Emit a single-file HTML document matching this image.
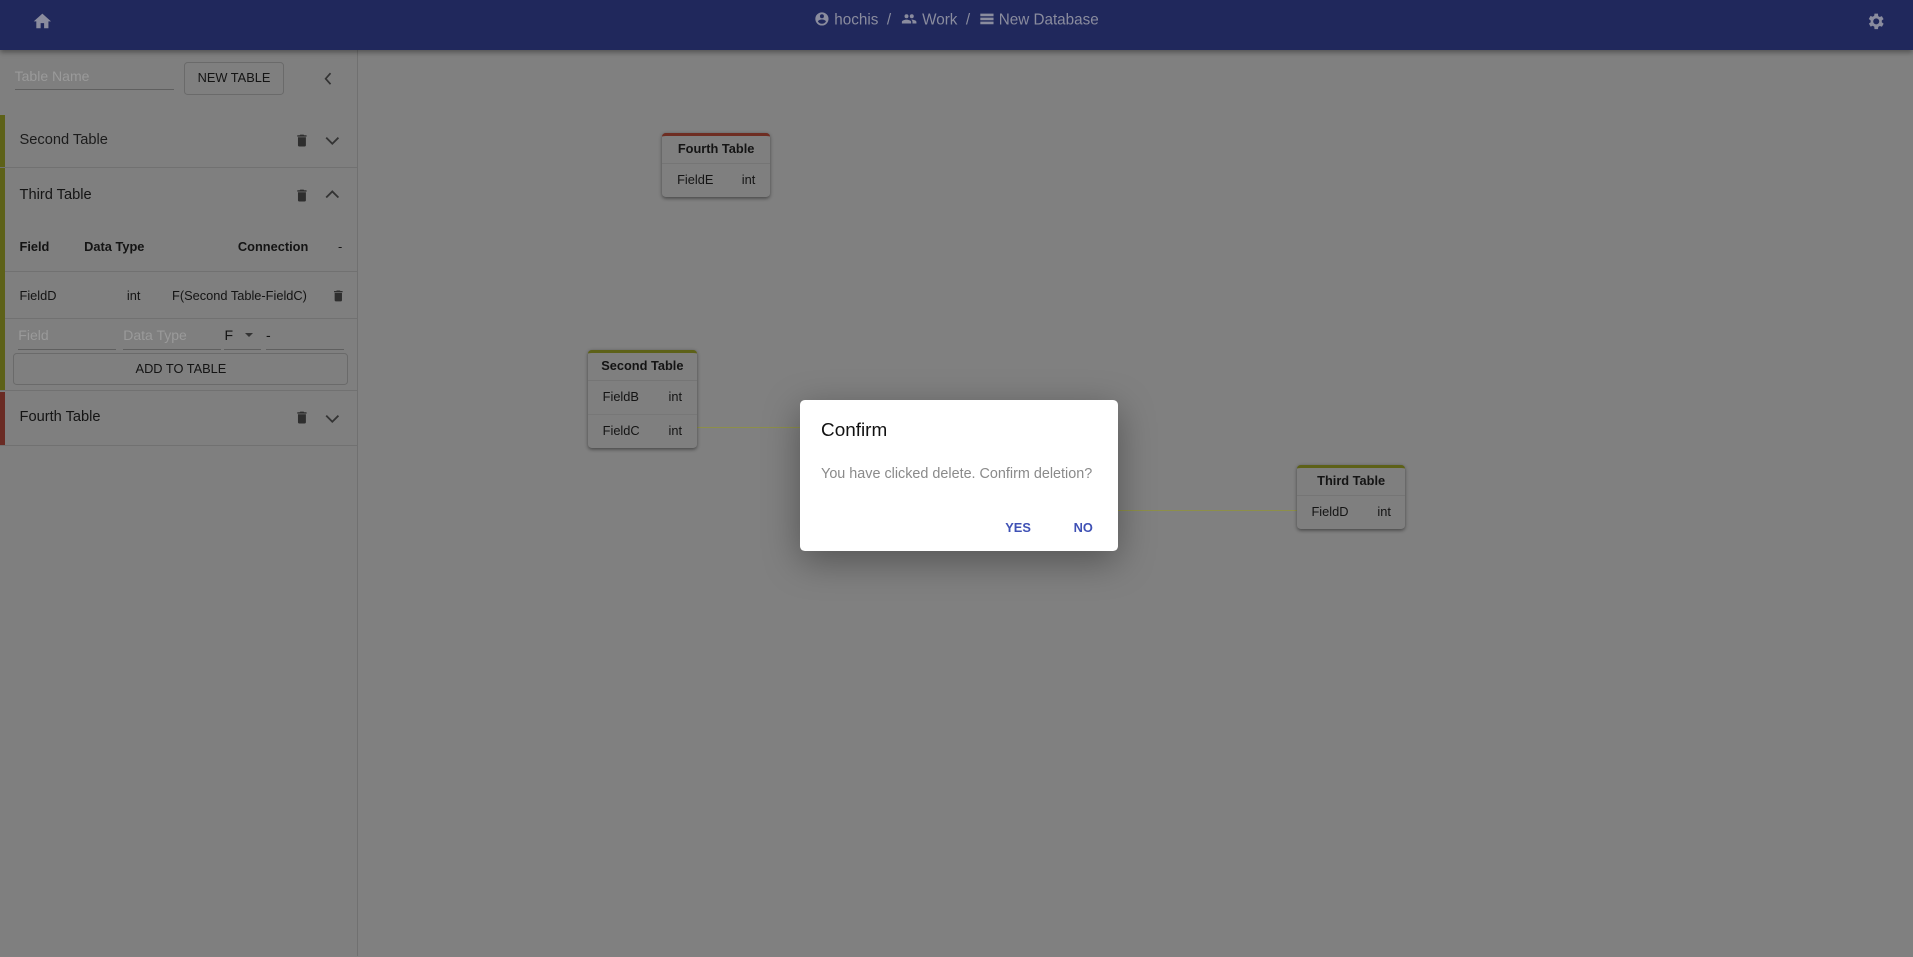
<!DOCTYPE html>
<html><head><meta charset="utf-8"><style>
html,body{margin:0;padding:0;width:1913px;height:957px;overflow:hidden;background:#808080}
#r{zoom:1.22;position:relative;width:1568px;height:784px;font-family:"Liberation Sans",sans-serif;color:#141414}
.a{position:absolute}
.hdr{left:0;top:0;width:1568px;height:41px;background:#20285c;box-shadow:0 2px 4px rgba(0,0,0,.35);z-index:2}
.bc{left:0;right:0;top:9px;text-align:center;color:#8a8c9e;font-size:12.5px}
.side{left:0;top:41px;width:293px;height:743px;border-right:1px solid #707070;background:#7f7f7f}
.row{position:absolute;left:0;width:293px;border-bottom:1px solid #717171}
.bar{position:absolute;left:0;top:0;bottom:0;width:4px}
.t13{font-size:12px}
.card{position:absolute;background:#7f7f7f;border-radius:3px;box-shadow:0 1px 3px rgba(0,0,0,.45);font-size:10.5px}
.card .h{text-align:center;font-weight:bold;height:22px;line-height:22px;border-bottom:1px solid #757575}
.card .f{height:27px;line-height:27px;border-bottom:1px solid #777;position:relative}
.card .f:last-child{border-bottom:none}
.ln{position:absolute;height:0;border-top:1px solid #8d8f4a}
</style></head><body><div id="r">
<div class="a hdr">
 <svg class="a" style="left:26px;top:9px" width="17" height="17" viewBox="0 0 24 24"><path fill="#8a8c9e" d="M10 20v-6h4v6h5v-8h3L12 3 2 12h3v8z"/></svg>
 <div class="a bc">
  <svg width="13" height="13" viewBox="0 0 24 24" style="vertical-align:-2px"><path fill="#8a8c9e" d="M12 2a10 10 0 100 20 10 10 0 000-20zm0 3a3 3 0 110 6 3 3 0 010-6zm0 14.2a7.2 7.2 0 01-6-3.2c.03-2 4-3.1 6-3.1s5.97 1.1 6 3.1a7.2 7.2 0 01-6 3.2z"/></svg> hochis &nbsp;/&nbsp;
  <svg width="15" height="13" viewBox="0 0 24 24" style="vertical-align:-2px"><path fill="#8a8c9e" d="M16 11a3 3 0 100-6 3 3 0 000 6zm-8 0a3 3 0 100-6 3 3 0 000 6zm0 2c-2.3 0-7 1.2-7 3.5V19h14v-2.5C15 14.2 10.3 13 8 13zm8 0c-.3 0-.6 0-1 .05 1.2.8 2 2 2 3.450V19h6v-2.5c0-2.3-4.7-3.5-7-3.5z"/></svg> Work &nbsp;/&nbsp;
  <svg width="13" height="13" viewBox="0 0 24 24" style="vertical-align:-2px"><path fill="#8a8c9e" d="M2 20h20v-4H2v4zm0-6h20v-4H2v4zm0-10v4h20V4H2z"/></svg> New Database
 </div>
 <svg class="a" style="left:1529px;top:9px" width="17" height="17" viewBox="0 0 24 24"><path fill="#8a8c9e" d="M19.4 13a7.5 7.5 0 000-2l2.1-1.6-2-3.5-2.5 1a7.3 7.3 0 00-1.7-1L15 3h-4l-.4 2.7a7.3 7.3 0 00-1.7 1l-2.5-1-2 3.5L6.6 11a7.5 7.5 0 000 2l-2.1 1.6 2 3.5 2.5-1c.5.4 1.1.8 1.7 1L11 21h4l.4-2.7c.6-.3 1.2-.6 1.7-1l2.5 1 2-3.5L19.4 13zM13 15.5a3.5 3.5 0 110-7 3.5 3.5 0 010 7z"/></svg>
</div>

<div class="a side">
 <div class="a" style="left:12px;top:15px;width:131px;border-bottom:1px solid #5f5f5f;height:17px;font-size:11.5px;color:#9a9a9a">Table Name</div>
 <div class="a" style="left:151px;top:10px;width:80px;height:25px;border:1px solid #6a6a6a;border-radius:3px;font-size:10.5px;line-height:25px;text-align:center">NEW TABLE</div>
 <svg class="a" style="left:264px;top:18px" width="10" height="11" viewBox="0 0 10 11"><path d="M7 1L3 5.5 7 10" stroke="#333" stroke-width="1.4" fill="none"/></svg>

 <div class="row" style="top:53px;height:43px"><div class="bar" style="background:#5d6118"></div>
  <div class="a t13" style="left:16px;top:14px;color:#1c1c1c">Second Table</div>
  <svg class="a" style="left:241px;top:14px" width="13" height="14" viewBox="0 0 24 24"><path fill="#2e2e2e" d="M6 19a2 2 0 002 2h8a2 2 0 002-2V7H6v12zM19 4h-3.5l-1-1h-5l-1 1H5v2h14V4z"/></svg>
  <svg class="a" style="left:266px;top:16px" width="12" height="10" viewBox="0 0 12 10"><path d="M1 3l5 5 5-5" stroke="#333" stroke-width="1.5" fill="none"/></svg>
 </div>

 <div class="row" style="top:97px;height:182px"><div class="bar" style="background:#5d6118"></div>
  <div class="a t13" style="left:16px;top:15px">Third Table</div>
  <svg class="a" style="left:241px;top:15px" width="13" height="14" viewBox="0 0 24 24"><path fill="#2e2e2e" d="M6 19a2 2 0 002 2h8a2 2 0 002-2V7H6v12zM19 4h-3.5l-1-1h-5l-1 1H5v2h14V4z"/></svg>
  <svg class="a" style="left:266px;top:17px" width="12" height="10" viewBox="0 0 12 10"><path d="M1 7l5-5 5 5" stroke="#333" stroke-width="1.5" fill="none"/></svg>
  <div class="a" style="left:4px;top:84px;width:289px;border-top:1px solid #717171"></div>
  <div class="a" style="left:4px;top:123px;width:289px;border-top:1px solid #717171"></div>
  <div class="a" style="left:16px;top:58px;font-size:10.5px;font-weight:bold">Field</div>
  <div class="a" style="left:69px;top:58px;font-size:10.5px;font-weight:bold">Data Type</div>
  <div class="a" style="left:195px;top:58px;font-size:10.5px;font-weight:bold">Connection</div>
  <div class="a" style="left:277px;top:58px;font-size:10.5px">-</div>
  <div class="a" style="left:16px;top:98px;font-size:10.5px">FieldD</div>
  <div class="a" style="left:104px;top:98px;font-size:10.5px">int</div>
  <div class="a" style="left:141px;top:98px;font-size:10.5px">F(Second Table-FieldC)</div>
  <svg class="a" style="left:271px;top:98px" width="12" height="13" viewBox="0 0 24 24"><path fill="#2e2e2e" d="M6 19a2 2 0 002 2h8a2 2 0 002-2V7H6v12zM19 4h-3.5l-1-1h-5l-1 1H5v2h14V4z"/></svg>
  <div class="a" style="left:15px;top:130px;width:80px;height:18px;border-bottom:1px solid #5f5f5f;font-size:11.5px;color:#9a9a9a">Field</div>
  <div class="a" style="left:101px;top:130px;width:80px;height:18px;border-bottom:1px solid #5f5f5f;font-size:11.5px;color:#9a9a9a">Data Type</div>
  <div class="a" style="left:184px;top:130px;width:30px;height:18px;border-bottom:1px solid #5f5f5f;font-size:11.5px">F<span style="position:absolute;left:17px;top:5px;border:4px solid transparent;border-top:4px solid #333"></span></div>
  <div class="a" style="left:218px;top:130px;width:64px;height:18px;border-bottom:1px solid #5f5f5f;font-size:11.5px">-</div>
  <div class="a" style="left:11px;top:151px;width:273px;height:25px;border:1px solid #6a6a6a;border-radius:3px;font-size:10.5px;line-height:25px;text-align:center">ADD TO TABLE</div>
 </div>

 <div class="row" style="top:280px;height:44px"><div class="bar" style="background:#6a2b24"></div>
  <div class="a t13" style="left:16px;top:14px">Fourth Table</div>
  <svg class="a" style="left:241px;top:14px" width="13" height="14" viewBox="0 0 24 24"><path fill="#2e2e2e" d="M6 19a2 2 0 002 2h8a2 2 0 002-2V7H6v12zM19 4h-3.5l-1-1h-5l-1 1H5v2h14V4z"/></svg>
  <svg class="a" style="left:266px;top:17px" width="12" height="10" viewBox="0 0 12 10"><path d="M1 3l5 5 5-5" stroke="#333" stroke-width="1.5" fill="none"/></svg>
 </div>
</div>

<div class="ln" style="left:571px;top:350px;width:85px"></div>
<div class="ln" style="left:916px;top:418px;width:147px"></div>

<div class="card" style="left:543px;top:109px;width:88px;border-top:3px solid #6e2d22">
 <div class="h">Fourth Table</div>
 <div class="f"><span class="a" style="left:12px">FieldE</span><span class="a" style="left:65px">int</span></div>
</div>
<div class="card" style="left:482px;top:287px;width:89px;border-top:3px solid #5d6118">
 <div class="h">Second Table</div>
 <div class="f"><span class="a" style="left:12px">FieldB</span><span class="a" style="left:66px">int</span></div>
 <div class="f"><span class="a" style="left:12px">FieldC</span><span class="a" style="left:66px">int</span></div>
</div>
<div class="card" style="left:1063px;top:381px;width:89px;border-top:3px solid #5d6118">
 <div class="h">Third Table</div>
 <div class="f"><span class="a" style="left:12px">FieldD</span><span class="a" style="left:66px">int</span></div>
</div>

<div class="a" style="left:656px;top:328px;width:260px;height:124px;background:#fff;border-radius:4px;box-shadow:0 8px 30px rgba(0,0,0,.35)">
 <div class="a" style="left:17px;top:16px;font-size:15.5px;color:#111">Confirm</div>
 <div class="a" style="left:17px;top:54px;font-size:11.8px;color:#8a8a8a;white-space:nowrap">You have clicked delete. Confirm deletion?</div>
 <div class="a" style="left:168px;top:98px;font-size:10.5px;color:#3f51b5;font-weight:bold">YES</div>
 <div class="a" style="left:224px;top:98px;font-size:10.5px;color:#3f51b5;font-weight:bold">NO</div>
</div>
</div></body></html>
